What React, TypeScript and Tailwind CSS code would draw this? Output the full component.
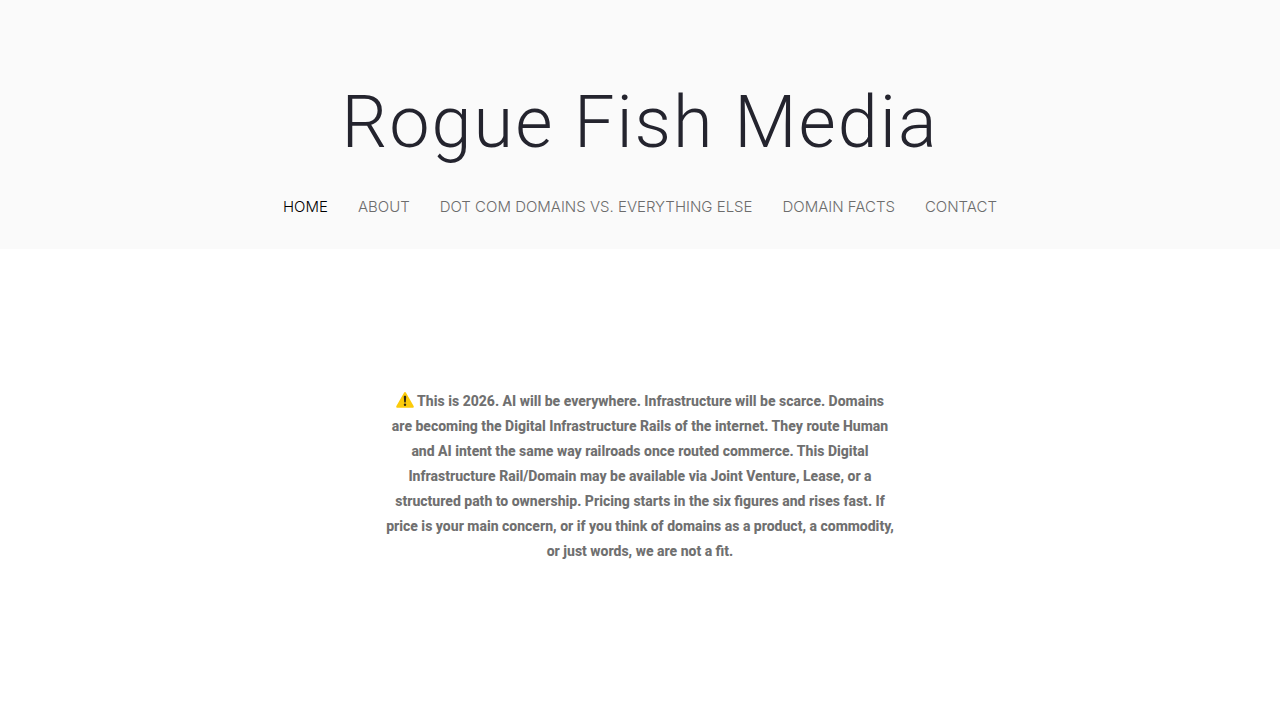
const NAV_ITEMS = [
  { label: 'Home', href: '#home', active: true },
  { label: 'About', href: '#about' },
  { label: 'Dot com domains vs. everything else', href: '#dot-com' },
  { label: 'Domain facts', href: '#facts' },
  { label: 'Contact', href: '#contact' },
]

function WarningIcon() {
  return (
    <svg className="inline-block align-[-2px]" width="18" height="16" viewBox="0 0 18 16" role="img" aria-label="Warning">
      <path d="M8 .7a1.15 1.15 0 0 1 2 0l7.6 13.4a1.1 1.1 0 0 1-1 1.7H1.4a1.1 1.1 0 0 1-1-1.7z" fill="#fccb0a" />
      <path d="M9 3.8c.8 0 1.3.5 1.2 1.3l-.4 4.8c-.1.9-1.5.9-1.6 0l-.4-4.8C7.700 4.300 8.200 3.800 9 3.800z" fill="#2e2814" />
      <circle cx="9" cy="12.800" r="1.200" fill="#2e2814" />
    </svg>
  )
}

export default function App() {
  return (
    <div className="min-h-screen bg-white font-['Inter',sans-serif]">
      <header className="bg-[#fafafa] px-6 pt-20 pb-8 text-center">
        <h1 className="font-['Roboto',sans-serif] text-[72px] leading-[85px] font-light tracking-[2px] text-[#24242e]">
          Rogue Fish Media
        </h1>
        <nav className="mt-8 flex flex-wrap justify-center gap-x-[30px] text-[15px] leading-5 font-light uppercase">
          {NAV_ITEMS.map(item => (
            <a
              key={item.href}
              href={item.href}
              aria-current={item.active ? 'page' : undefined}
              className={item.active ? 'text-black' : 'text-[#6c6c6c]'}
            >
              {item.label}
            </a>
          ))}
        </nav>
      </header>

      <main className="px-6 pt-[140px] pb-20">
        <p className="mx-auto max-w-[540px] text-center font-['Roboto',sans-serif] text-[14px] leading-[25px] font-extrabold text-[#707070]">
          <WarningIcon /> This is 2026. AI will be everywhere. Infrastructure will be scarce. Domains
          <br />
          are becoming the Digital Infrastructure Rails of the internet. They route Human
          <br />
          and AI intent the same way railroads once routed commerce. This Digital
          <br />
          Infrastructure Rail/Domain may be available via Joint Venture, Lease, or a
          <br />
          structured path to ownership. Pricing starts in the six figures and rises fast. If
          <br />
          price is your main concern, or if you think of domains as a product, a commodity,
          <br />
          or just words, we are not a fit.
        </p>
      </main>
    </div>
  )
}
